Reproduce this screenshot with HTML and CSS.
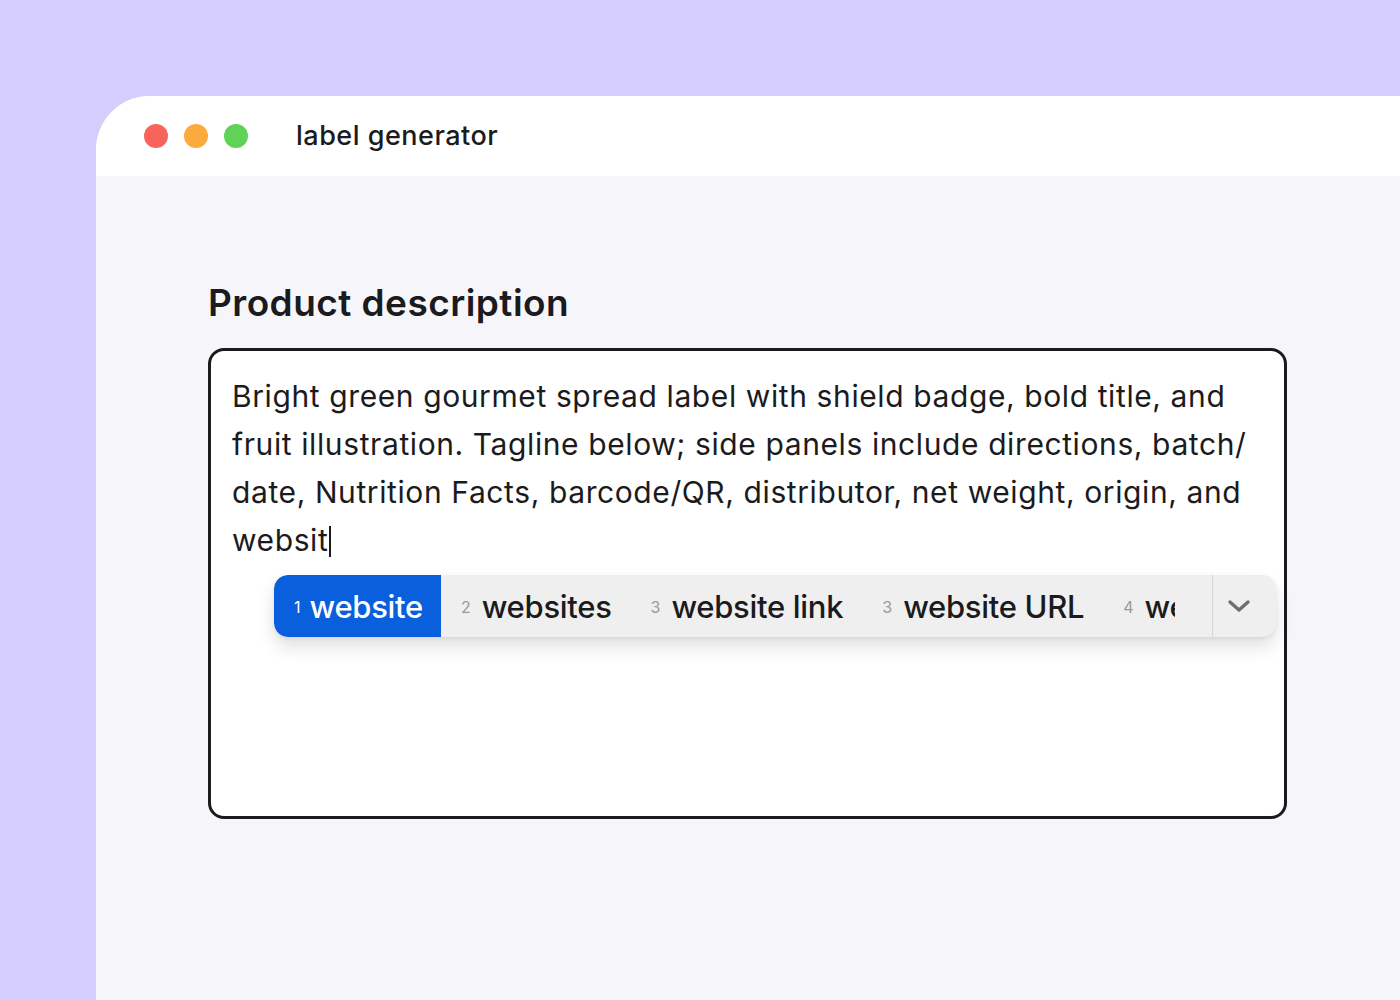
FILE: index.html
```html
<!DOCTYPE html>
<html lang="en">
<head>
<meta charset="utf-8">
<title>label generator</title>
<link rel="stylesheet" href="styles.css">
</head>
<body>
<div class="page">
  <div class="window">
    <div class="titlebar">
      <div class="lights">
        <span class="light red"></span>
        <span class="light yellow"></span>
        <span class="light green"></span>
      </div>
      <div class="app-title">label generator</div>
    </div>
    <div class="content">
      <h1 class="heading">Product description</h1>
      <div class="textbox">
        <div class="text">Bright green gourmet spread label with shield badge, bold title, and<br>fruit illustration. Tagline below; side panels include directions, batch/<br>date, Nutrition Facts, barcode/QR, distributor, net weight, origin, and<br>websit<span class="caret"></span></div>
        <div class="suggest">
          <div class="suggest-list">
            <div class="item active"><span class="num">1</span><span class="word">website</span></div>
            <div class="item"><span class="num">2</span><span class="word">websites</span></div>
            <div class="item"><span class="num">3</span><span class="word">website link</span></div>
            <div class="item"><span class="num">3</span><span class="word">website URL</span></div>
            <div class="item"><span class="num">4</span><span class="word">website address</span></div>
          </div>
          <div class="spacer"></div>
          <div class="more">
            <svg width="24" height="14" viewBox="0 0 24 14"><path d="M3 3 L12 11 L21 3" fill="none" stroke="#6e6e6e" stroke-width="3.4" stroke-linecap="round" stroke-linejoin="round"/></svg>
          </div>
        </div>
      </div>
    </div>
  </div>
</div>
</body>
</html>
```

FILE: styles.css
```css
* { box-sizing: border-box; }
html, body {
  margin: 0;
  padding: 0;
  height: 1000px;
  overflow: hidden;
}
body {
  background: #d5cefc;
  font-family: "Inter", "Lato", sans-serif;
  color: #1b1b1d;
}
.page {
  padding: 96px 0 0 96px;
  height: 1000px;
  overflow: hidden;
}
.window {
  width: 1304px;
  height: 904px;
  background: #f6f6fa;
  border-top-left-radius: 54px;
  overflow: hidden;
}
.titlebar {
  height: 80px;
  background: #ffffff;
  display: flex;
  align-items: center;
  padding-left: 48px;
  padding-bottom: 2px;
}
.lights {
  display: flex;
  gap: 16px;
  margin-top: 2px;
}
.light {
  width: 24px;
  height: 24px;
  border-radius: 50%;
  display: block;
}
.red { background: #f8645a; }
.yellow { background: #fbab3b; }
.green { background: #5fd355; }
.app-title {
  margin-left: 48px;
  font-size: 27px;
  font-weight: 500;
  letter-spacing: 0.5px;
  color: #1b1b1d;
}
.content {
  padding: 104px 0 0 112px;
}
.heading {
  margin: 0 0 22px 0;
  font-size: 37px;
  font-weight: 600;
  line-height: 46px;
  letter-spacing: 0.45px;
  color: #1b1b1d;
}
.textbox {
  position: relative;
  width: 1079px;
  height: 471px;
  background: #ffffff;
  border: 3px solid #1b1b1d;
  border-radius: 16px;
  padding: 21px 21px;
}
.text {
  font-size: 30px;
  line-height: 48px;
  letter-spacing: 0.6px;
  white-space: nowrap;
}
.caret {
  display: inline-block;
  width: 2px;
  height: 31px;
  background: #1b1b1d;
  vertical-align: -6px;
  margin-left: 1px;
}
.suggest {
  position: absolute;
  left: 63px;
  top: 224px;
  width: 1002px;
  height: 62px;
  background: #efefef;
  border-radius: 14px;
  display: flex;
  align-items: stretch;
  box-shadow: 0 10px 18px rgba(0,0,0,0.12), 0 2px 4px rgba(0,0,0,0.06);
  overflow: hidden;
}
.suggest-list {
  width: 901px;
  display: flex;
  overflow: hidden;
  flex-shrink: 0;
}
.item {
  display: flex;
  align-items: center;
  padding: 0 19px 0 20px;
  white-space: nowrap;
  flex-shrink: 0;
}
.item .num {
  font-size: 16px;
  color: #9a9a9a;
  margin-right: 11px;
  margin-top: 2px;
}
.item .word {
  font-size: 31px;
  color: #1b1b1d;
  font-weight: 500;
  letter-spacing: -0.3px;
}
.item.active {
  background: #0a5fdc;
  border-radius: 14px 0 0 14px;
  padding-right: 18px;
}
.item.active .num {
  margin-right: 9px;
}
.item.active .num,
.item.active .word {
  color: #ffffff;
}
.spacer { flex: 1; }
.more {
  width: 64px;
  border-left: 1px solid #d6d6d6;
  display: flex;
  align-items: center;
  justify-content: flex-start;
  padding-left: 14px;
}
```
